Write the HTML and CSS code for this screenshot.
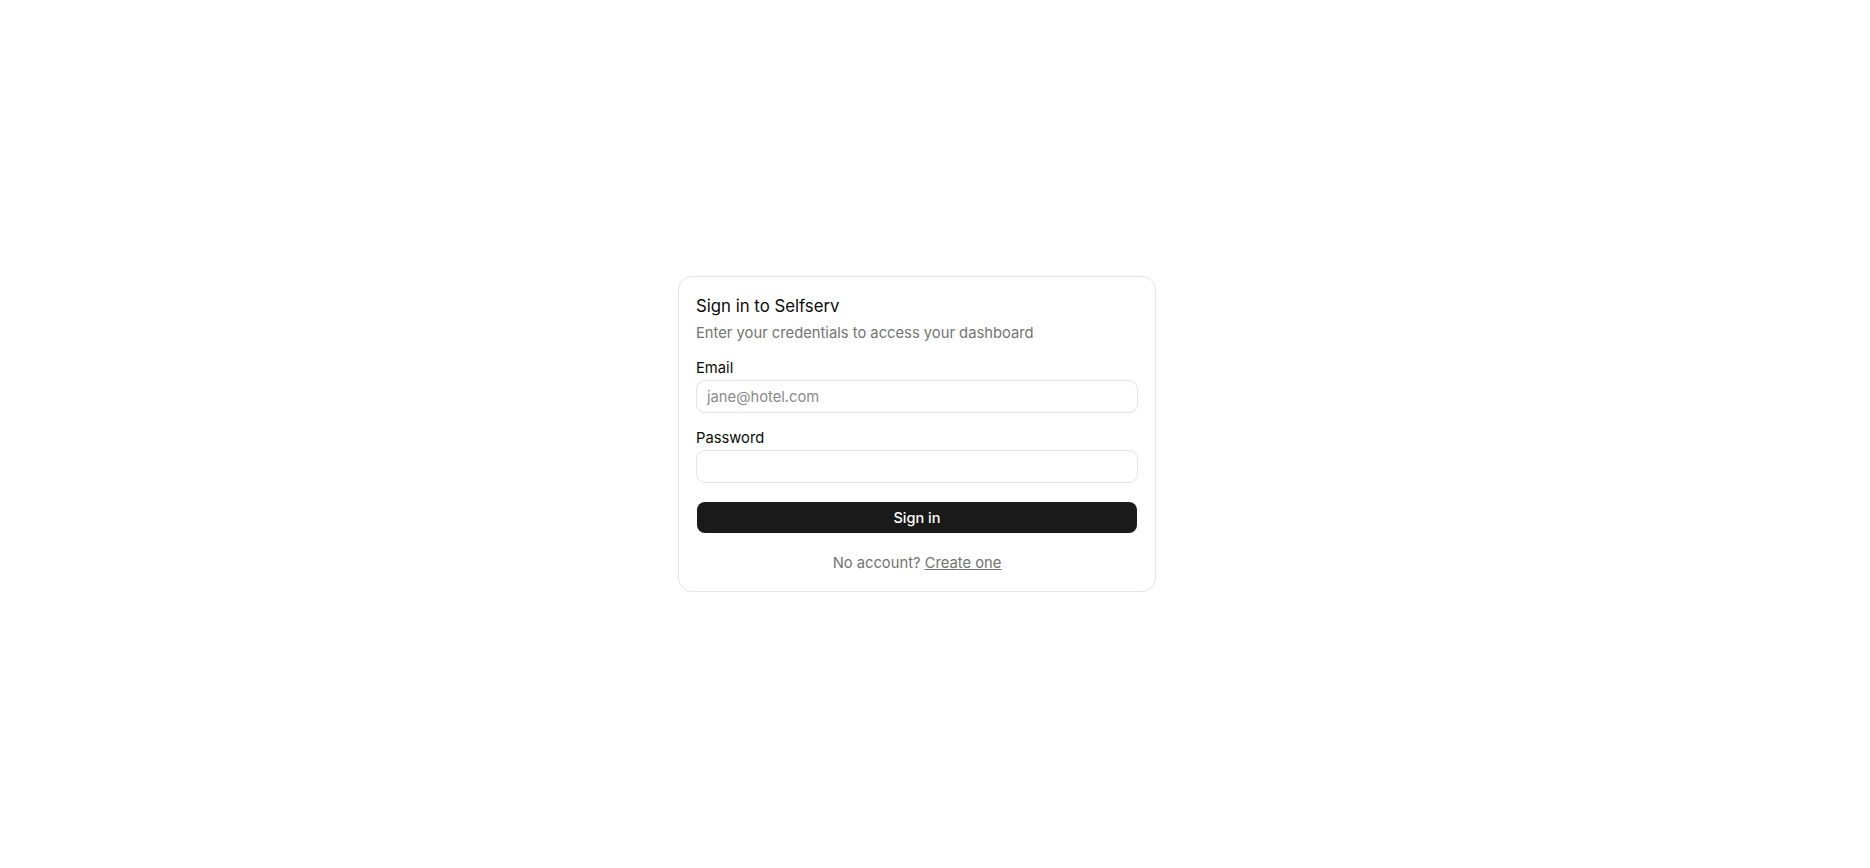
FILE: index.html
```html
<!DOCTYPE html>
<html lang="en">
<head>
<meta charset="utf-8">
<title>Sign in to Selfserv</title>
<link rel="stylesheet" href="styles.css">
</head>
<body>
<main class="page">
  <form class="card">
    <div class="head">
      <h1 class="title">Sign in to Selfserv</h1>
      <p class="subtitle">Enter your credentials to access your dashboard</p>
    </div>
    <div class="field">
      <label class="label" for="email">Email</label>
      <input class="input" id="email" type="email" placeholder="jane@hotel.com">
    </div>
    <div class="field">
      <label class="label" for="password">Password</label>
      <input class="input" id="password" type="password">
    </div>
    <button class="btn" type="button">Sign in</button>
    <p class="foot">No account? <a class="link" href="#">Create one</a></p>
  </form>
</main>
</body>
</html>
```
FILE: styles.css
```css
* { box-sizing: border-box; }
html, body { margin: 0; padding: 0; background: #ffffff; }
body {
  font-family: Inter, "Noto Sans", "Liberation Sans", sans-serif;
  color: #0a0a0a;
}
.page {
  height: 868px;
  display: flex;
  align-items: center;
  justify-content: center;
  padding-right: 36px;
}
.card {
  width: 478px;
  border: 1px solid #e4e4e7;
  border-radius: 14px;
  padding: 17px 17px 18px;
  display: flex;
  flex-direction: column;
  background: #fff;
}
.head { display: flex; flex-direction: column; gap: 5px; margin-bottom: 15px; }
.title {
  margin: 0;
  font-size: 16.75px;
  line-height: 24px;
  font-weight: 400;
  color: #0a0a0a;
}
.subtitle {
  margin: 0;
  font-size: 14.75px;
  line-height: 20px;
  color: #737373;
}
.field { display: flex; flex-direction: column; gap: 2px; margin-bottom: 15px; }
.label {
  font-size: 14.75px;
  line-height: 20px;
  font-weight: 400;
  color: #0a0a0a;
}
.input {
  height: 33px;
  border: 1px solid #e4e4e7;
  border-radius: 9px;
  padding: 0 10px;
  font-family: inherit;
  font-size: 14.75px;
  color: #0a0a0a;
  background: #fff;
  outline: none;
}
.input::placeholder { color: #8a8a8a; }
.btn {
  margin: 4px 1px 0;
  height: 31px;
  border: none;
  border-radius: 8px;
  background: #1a1a1a;
  color: #fff;
  font-family: inherit;
  font-size: 14.5px;
  font-weight: 500;
}
.foot {
  margin: 20px 0 0;
  text-align: center;
  font-size: 14.75px;
  line-height: 20px;
  color: #737373;
}
.link { color: #737373; text-decoration: underline; }
```
